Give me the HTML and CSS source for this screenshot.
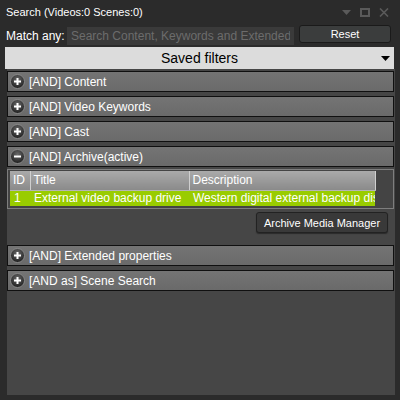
FILE: index.html
```html
<!DOCTYPE html>
<html>
<head>
    <meta charset="UTF-8">
    <title>Search</title>
    <link rel="stylesheet" href="styles.css">
</head>
<body>
    <div id="search-window">
        <div id="title-bar">
            <span class="window-title">Search (Videos:0 Scenes:0)</span>
            <div class="window-controls">
                <svg width="9" height="5" viewBox="0 0 9 5"><path d="M0 0H9L4.5 5Z" fill="#5a5a5a"/></svg>
                <svg width="10" height="9" viewBox="0 0 10 9"><rect x="1" y="1" width="8" height="7" fill="none" stroke="#5a5a5a" stroke-width="2"/></svg>
                <svg width="10" height="9" viewBox="0 0 10 9"><path d="M1 0.5L9 8.5M9 0.5L1 8.5" stroke="#5a5a5a" stroke-width="1.6"/></svg>
            </div>
        </div>

        <div id="match-row">
            <label for="match-input">Match any:</label>
            <input id="match-input" type="text" placeholder="Search Content, Keywords and Extended">
            <button class="reset-button">Reset</button>
        </div>

        <div id="saved-filters">
            <span>Saved filters</span>
            <svg class="select-arrow" width="9" height="6" viewBox="0 0 9 6"><path d="M0 0H9L4.5 5Z" fill="#000"/></svg>
        </div>

        <div id="filter-panel">
            <div class="section-header">
                <svg class="toggle-icon" width="15" height="15" viewBox="0 0 15 15"><use href="#circle"/><path d="M4 7.5H11M7.5 4V11" stroke="#fff" stroke-width="2"/></svg>
                <span>[AND] Content</span>
            </div>
            <div class="section-header">
                <svg class="toggle-icon" width="15" height="15" viewBox="0 0 15 15"><use href="#circle"/><path d="M4 7.5H11M7.5 4V11" stroke="#fff" stroke-width="2"/></svg>
                <span>[AND] Video Keywords</span>
            </div>
            <div class="section-header">
                <svg class="toggle-icon" width="15" height="15" viewBox="0 0 15 15"><use href="#circle"/><path d="M4 7.5H11M7.5 4V11" stroke="#fff" stroke-width="2"/></svg>
                <span>[AND] Cast</span>
            </div>
            <div class="section-header">
                <svg class="toggle-icon" width="15" height="15" viewBox="0 0 15 15"><use href="#circle"/><path d="M4 7.5H11" stroke="#fff" stroke-width="2"/></svg>
                <span>[AND] Archive(active)</span>
            </div>

            <div class="section-body">
                <div class="grid-box">
                    <table class="archive-grid">
                        <colgroup>
                            <col style="width: 20px">
                            <col style="width: 159px">
                            <col style="width: 186px">
                        </colgroup>
                        <thead>
                            <tr><th>ID</th><th>Title</th><th>Description</th></tr>
                        </thead>
                        <tbody>
                            <tr class="selected">
                                <td>1</td>
                                <td>External video backup drive</td>
                                <td>Western digital external backup disk</td>
                            </tr>
                        </tbody>
                    </table>
                </div>
                <button class="manager-button">Archive Media Manager</button>
            </div>

            <div class="section-header after-body">
                <svg class="toggle-icon" width="15" height="15" viewBox="0 0 15 15"><use href="#circle"/><path d="M4 7.5H11M7.5 4V11" stroke="#fff" stroke-width="2"/></svg>
                <span>[AND] Extended properties</span>
            </div>
            <div class="section-header">
                <svg class="toggle-icon" width="15" height="15" viewBox="0 0 15 15"><use href="#circle"/><path d="M4 7.5H11M7.5 4V11" stroke="#fff" stroke-width="2"/></svg>
                <span>[AND as] Scene Search</span>
            </div>
        </div>
    </div>

    <!-- shared icon parts -->
    <svg width="0" height="0" style="position: absolute">
        <defs>
            <radialGradient id="knob" cx="0.5" cy="0.35" r="0.65">
                <stop offset="0" stop-color="#6a6a6a"/>
                <stop offset="1" stop-color="#1c1c1c"/>
            </radialGradient>
            <circle id="circle" cx="7.5" cy="7.5" r="7" fill="url(#knob)" stroke="#8a8a8a" stroke-width="1"/>
        </defs>
    </svg>
</body>
</html>
```

FILE: styles.css
```css
* {
    box-sizing: border-box;
}

body {
    margin: 0;
    background-color: #2b2b2b;
    font-family: "Liberation Sans", Arial, sans-serif;
}

#search-window {
    width: 400px;
    height: 400px;
    background-color: #2b2b2b;
    display: flex;
    flex-direction: column;
    overflow: hidden;
}

#title-bar {
    height: 25px;
    display: flex;
    justify-content: space-between;
    align-items: center;
    padding: 0 11px 1px 6px;
}

.window-title {
    color: #fff;
    font-size: 11px;
}

.window-controls {
    display: flex;
    align-items: center;
    gap: 9px;
}

.window-controls svg {
    display: block;
}

#match-row {
    height: 22px;
    display: flex;
    align-items: flex-start;
    padding-left: 6px;
}

#match-row label {
    color: #fff;
    font-size: 12px;
    width: 61px;
    margin-top: 4px;
}

#match-input {
    width: 227px;
    height: 18px;
    margin-top: 2px;
    padding: 0 4px;
    border: none;
    background-color: #3a3a3a;
    color: #fff;
    font-family: "Liberation Sans", Arial, sans-serif;
    font-size: 12px;
    outline: none;
}

#match-input::placeholder {
    color: #6c6c6c;
}

.reset-button {
    width: 92px;
    height: 18px;
    margin-left: 5px;
    padding: 0;
    background-color: #3b3d3d;
    border: 1px solid #1a1a1a;
    border-radius: 3px;
    color: #fff;
    font-family: "Liberation Sans", Arial, sans-serif;
    font-size: 11px;
}

#saved-filters {
    height: 22px;
    margin: 0 6px 0 5px;
    background-color: #dcdcdc;
    display: flex;
    align-items: center;
    justify-content: center;
    position: relative;
    font-size: 14px;
    color: #000;
}

.select-arrow {
    position: absolute;
    right: 4px;
    top: 9px;
}

#filter-panel {
    flex: 1;
    margin: 0 5px 5px 7px;
    padding: 2px 1px 0 0;
    background-color: #464646;
    display: flex;
    flex-direction: column;
    gap: 4px;
}

.section-header {
    height: 21px;
    display: flex;
    align-items: center;
    gap: 4px;
    padding-left: 2px;
    border: 1px solid #101010;
    background: linear-gradient(#747474, #6a6a6a);
    color: #fff;
    font-size: 12px;
}

.toggle-icon {
    display: block;
    flex: none;
}

.section-body {
    margin-top: -2px;
    display: flex;
    flex-direction: column;
}

.section-header.after-body {
    margin-top: 8px;
}

.grid-box {
    border: 1px solid #7e7e7e;
    background-color: #444;
    padding: 1px 17px 2px 2px;
}

.archive-grid {
    table-layout: fixed;
    width: 365px;
    border-collapse: collapse;
    font-size: 12px;
    color: #fff;
}

.archive-grid th {
    height: 19px;
    padding: 0 0 0 3px;
    text-align: left;
    font-weight: normal;
    background: linear-gradient(#aaa, #8a8a8a);
    border-right: 1px solid #cfcfcf;
    border-bottom: 1px solid #b5b5b5;
    white-space: nowrap;
    overflow: hidden;
}

.archive-grid td {
    height: 16px;
    padding: 0 0 0 4px;
    white-space: nowrap;
    overflow: hidden;
}

.archive-grid tr.selected td {
    background-color: #99cc00;
}

.manager-button {
    align-self: flex-end;
    width: 132px;
    height: 21px;
    margin: 3px 6px 0 0;
    padding: 0;
    background-color: #393939;
    border: 1px solid #222;
    border-radius: 3px;
    box-shadow: 0 1px 1px #2a2a2a;
    color: #fff;
    font-family: "Liberation Sans", Arial, sans-serif;
    font-size: 11px;
}
```
